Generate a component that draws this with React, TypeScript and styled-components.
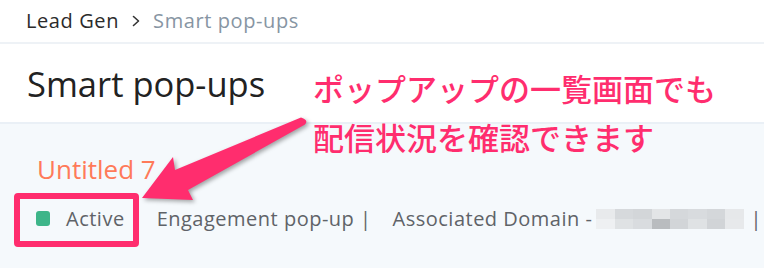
import React from 'react';
import styled, { createGlobalStyle } from 'styled-components';

const GlobalStyle = createGlobalStyle`
    html, body {
        margin: 0;
        padding: 0;
        background: #f5f9fc;
    }
    body {
        font-family: 'Open Sans', 'Noto Sans', sans-serif;
    }
`;

const Page = styled.div`
    position: relative;
    width: 764px;
    height: 268px;
    overflow: hidden;
    background: #f5f9fc;
`;

const Breadcrumb = styled.nav`
    display: flex;
    align-items: center;
    gap: 12px;
    height: 44px;
    padding: 0 0 1px 26px;
    box-sizing: border-box;
    background: #fff;
    border-bottom: 2px solid #eef2f6;
    font-size: 20px;
    letter-spacing: 0.6px;
`;

const Crumb = styled.span<{ $current?: boolean }>`
    color: ${(p) => (p.$current ? '#8795a3' : '#2b2b2b')};
`;

const Chevron = styled.svg`
    flex: none;
`;

const Header = styled.header`
    display: flex;
    align-items: center;
    height: 78px;
    padding-left: 27px;
    background: #fff;
    border-bottom: 2px solid #eaf0f6;
`;

const Title = styled.h1`
    margin: 0;
    font-size: 34.5px;
    font-weight: 400;
    color: #222;
`;

const Content = styled.section`
    padding: 27px 0 0 37px;
`;

const ItemName = styled.h2`
    margin: 0;
    font-size: 26px;
    line-height: 36px;
    font-weight: 400;
    color: #ff7a59;
`;

const MetaRow = styled.div`
    display: flex;
    align-items: center;
    margin-top: 18px;
    margin-left: -1px;
    font-size: 20px;
    letter-spacing: 0.5px;
    color: #5f6368;
    white-space: nowrap;
`;

const Status = styled.span`
    display: flex;
    flex: none;
    align-items: center;
    gap: 16px;
    margin-right: 32px;
`;

const StatusDot = styled.span`
    width: 14px;
    height: 15px;
    border-radius: 3px;
    background: #3db589;
`;

const MetaItem = styled.span`
    display: flex;
    flex: none;
    align-items: center;
    margin-right: 21px;
`;

const Blurred = styled.span`
    display: grid;
    flex: none;
    grid-template-columns: repeat(8, 18.4px);
    grid-template-rows: 10px 10px;
    margin: 0 7px 0 4px;
`;

const BlurCell = styled.span<{ $shade: string }>`
    background: ${(p) => p.$shade};
`;

const Highlight = styled.div`
    position: absolute;
    left: 14px;
    top: 193px;
    width: 125px;
    height: 54px;
    box-sizing: border-box;
    border: 6px solid #ff2d6e;
    border-radius: 4px;
`;

const Callout = styled.p`
    position: absolute;
    left: 313px;
    top: 63px;
    margin: 0;
    font-family: 'Noto Sans CJK JP', sans-serif;
    font-size: 31px;
    font-weight: 500;
    line-height: 49px;
    color: #ff2d6e;
`;

const ArrowSvg = styled.svg`
    position: absolute;
    left: 0;
    top: 0;
    overflow: visible;
    filter: drop-shadow(2px 2px 2px rgba(0, 0, 0, 0.35));
`;

const shades = [
    '#e8eaec', '#d6d9dc', '#d3d6d9', '#e3e5e7', '#d5d8db', '#d8dbde', '#d4d7da', '#e6e8ea',
    '#eef0f2', '#dfe2e4', '#d9dcdf', '#b9bcbf', '#d2d5d8', '#dfe2e4', '#d1d4d7', '#e7e9eb',
];

export default function App() {
    return (
        <>
            <GlobalStyle />
            <Page>
                <Breadcrumb>
                    <Crumb>Lead Gen</Crumb>
                    <Chevron width="10" height="12" viewBox="0 0 10 12">
                        <polyline
                            points="2.5,1.5 7.5,6 2.5,10.5"
                            fill="none"
                            stroke="#333"
                            strokeWidth="1.6"
                            strokeLinecap="round"
                            strokeLinejoin="round"
                        />
                    </Chevron>
                    <Crumb $current>Smart pop-ups</Crumb>
                </Breadcrumb>
                <Header>
                    <Title>Smart pop-ups</Title>
                </Header>
                <Content>
                    <ItemName>Untitled 7</ItemName>
                    <MetaRow>
                        <Status>
                            <StatusDot />
                            Active
                        </Status>
                        <MetaItem>Engagement pop-up |</MetaItem>
                        <MetaItem>
                            Associated Domain -
                            <Blurred>
                                {shades.map((s, i) => (
                                    <BlurCell key={i} $shade={s} />
                                ))}
                            </Blurred>
                            |
                        </MetaItem>
                    </MetaRow>
                </Content>

                <Highlight />
                <ArrowSvg width="764" height="268" viewBox="0 0 764 268">
                    <path
                        d="M301 117.5 L175 170 L173 157 L142 198 L193 200 L188 190 L305 124.5 Q309 120 301 117.5 Z"
                        fill="#ff2d6e"
                    />
                </ArrowSvg>
                <Callout>
                    ポップアップの一覧画面でも
                    <br />
                    配信状況を確認できます
                </Callout>
            </Page>
        </>
    );
}
